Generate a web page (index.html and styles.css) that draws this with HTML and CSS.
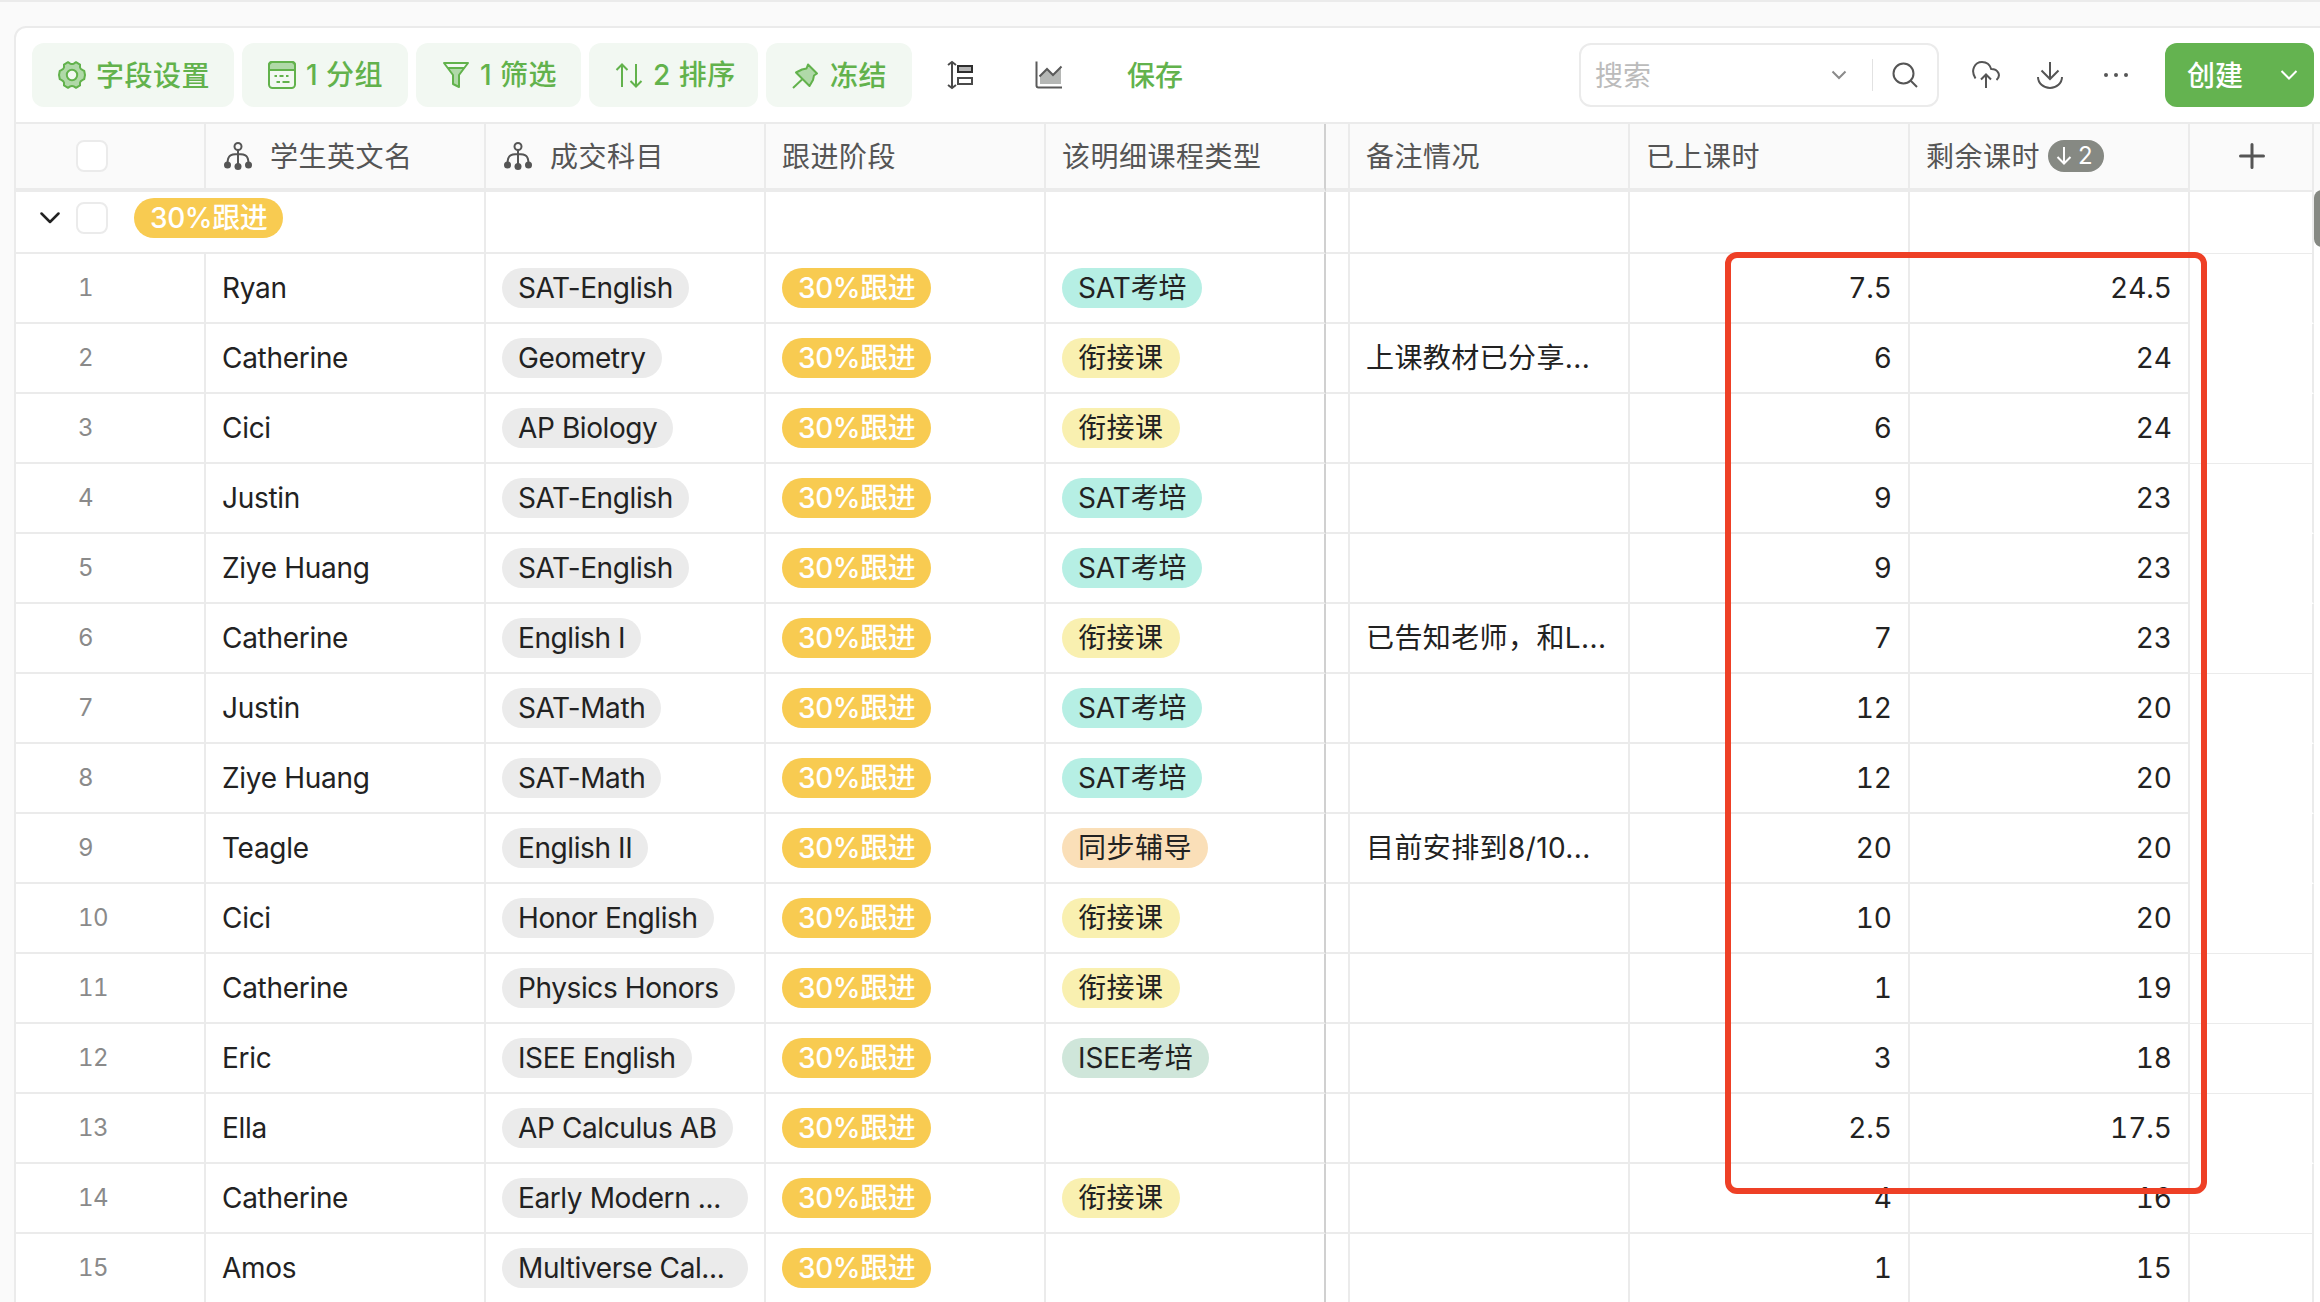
FILE: index.html
```html
<!DOCTYPE html>
<html lang="zh-CN">
<head>
    <meta charset="UTF-8">
    <meta name="viewport" content="width=device-width, initial-scale=1.0">
    <title>学生课时</title>
    <link rel="stylesheet" href="styles.css">
</head>
<body>
    <div class="panel">
        <div class="toolbar">
            <button class="tool-btn fields">
                <svg width="30" height="30" viewBox="0 0 30 30" fill="#b0d9a8" stroke="#62b24c" stroke-width="2" stroke-linejoin="round"><path d="M11 2.2 L13.2 3.6 Q15 4.6 16.8 3.6 L19 2.2 L23 4.6 L23 7.4 Q23.4 9.2 25.2 9.8 L27.2 10.8 L28 15 L27.2 19.2 L25.2 20.2 Q23.4 20.8 23 22.6 L23 25.4 L19 27.8 L16.8 26.4 Q15 25.4 13.2 26.4 L11 27.8 L7 25.4 L7 22.6 Q6.6 20.8 4.8 20.2 L2.8 19.2 L2 15 L2.8 10.8 L4.8 9.8 Q6.6 9.2 7 7.4 L7 4.6 Z"/><circle cx="15" cy="15" r="5.2" fill="#f2f8f2"/></svg>
                <span>字段设置</span>
            </button>
            <button class="tool-btn group">
                <svg width="30" height="30" viewBox="0 0 30 30" fill="none" stroke="#62b24c" stroke-width="2"><path d="M2 10 V5 Q2 2 5 2 H25 Q28 2 28 5 V10 Z" fill="#b0d9a8"/><rect x="2" y="2" width="26" height="26" rx="3.5"/><path d="M7.500 16 H10 M12.500 16 H16.500 M19 16 H21.500 M9.500 22 H13 M15.500 22 H22.500"/></svg>
                <span>1 分组</span>
            </button>
            <button class="tool-btn filter">
                <svg width="30" height="30" viewBox="0 0 30 30" fill="none" stroke="#62b24c" stroke-width="2" stroke-linejoin="round"><path d="M6.500 8.500 H23.500 L18 15 V27 L12 24 V15 Z" fill="#b0d9a8" stroke="none"/><path d="M3 3 H27 L18 15 V27 L12 24 V15 Z M6.500 8 H23.500"/></svg>
                <span>1 筛选</span>
            </button>
            <button class="tool-btn sort">
                <svg width="30" height="30" viewBox="0 0 30 30" fill="none" stroke="#62b24c" stroke-width="2"><path d="M8 27 V4.500 M2.500 10 L8 4.500 L13.500 10 M22 4 V26.500 M16.500 21 L22 26.500 L27.500 21"/></svg>
                <span>2 排序</span>
            </button>
            <button class="tool-btn freeze">
                <svg width="30" height="30" viewBox="0 0 30 30" fill="none" stroke="#62b24c" stroke-width="2" stroke-linejoin="round"><path d="M17 4.500 L26 13.500 L23 15.500 L22 20 L18.500 26 L5 12.500 L11 9.500 L15.500 8.500 Z" fill="#b0d9a8"/><path d="M2 28 L11 19.500"/></svg>
                <span>冻结</span>
            </button>
            <svg class="tool-icon height" width="28" height="30" viewBox="0 0 28 30" fill="none" stroke="#4a4a4a" stroke-width="2"><path d="M5 2 V28 M1 5 L5 2 L9 5 M1 25 L5 28 L9 25"/><rect x="11" y="6" width="14" height="6" fill="#b5b5b5" stroke="#2e2e2e"/><rect x="11" y="18" width="14" height="6"/></svg>
            <svg class="tool-icon chart" width="28" height="28" viewBox="0 0 28 28" fill="none" stroke="#5a5a5a" stroke-width="2"><path d="M5 15 L12 8 L18 14 L26 6 V23 H5 Z" fill="#b5b7b5" stroke="none"/><path d="M1.500 0.500 V24.500 Q1.500 26.500 3.500 26.500 H27 M4.500 15.500 L12 8 L18 14 L26.500 5.500"/></svg>
            <span class="save">保存</span>
            <div class="search">
                <span class="placeholder">搜索</span>
                <svg width="16" height="10" viewBox="0 0 16 10" fill="none" stroke="#8a8a8a" stroke-width="2"><path d="M1.500 1.500 L8 8 L14.500 1.500"/></svg>
                <i class="divider"></i>
                <svg width="26" height="26" viewBox="0 0 26 26" fill="none" stroke="#555" stroke-width="2"><circle cx="11.500" cy="11.500" r="10"/><path d="M18.500 18.500 L25 25"/></svg>
            </div>
            <svg class="tool-icon upload" width="30" height="30" viewBox="0 0 30 30" fill="none" stroke="#555" stroke-width="2"><path d="M4.500 18.500 C-1 10 4 2 11 2 C16 2 19 5 20.200 9 C27 9 30.500 15.500 25.500 20 M15 28 V14.500 M10 19.500 L15 14.500 L20 19.500"/></svg>
            <svg class="tool-icon download" width="28" height="30" viewBox="0 0 28 30" fill="none" stroke="#555" stroke-width="2"><path d="M14 2 V19 M5.500 10.500 L14 19 L22.500 10.500 M2 17 A12 11 0 0 0 26 17"/></svg>
            <svg class="tool-icon more" width="26" height="6" viewBox="0 0 26 6" fill="#555"><circle cx="3" cy="3" r="2"/><circle cx="13" cy="3" r="2"/><circle cx="23" cy="3" r="2"/></svg>
            <button class="create">
                <span>创建</span>
                <svg width="18" height="12" viewBox="0 0 18 12" fill="none" stroke="#fff" stroke-width="2"><path d="M1.500 2 L9 9.500 L16.500 2"/></svg>
            </button>
        </div>

        <div class="row head">
            <div class="cell check"><i class="checkbox"></i></div>
            <div class="cell">
                <svg class="tree" width="28" height="28" viewBox="0 0 28 28" fill="none" stroke="#555" stroke-width="2"><circle cx="14" cy="4.500" r="3.500"/><path d="M14 8 V24 M3.500 22 C3.500 14 6 12 14 12 C22 12 24.500 14 24.500 22"/><g fill="#555" stroke="none"><circle cx="3.500" cy="23" r="3.500"/><circle cx="14" cy="24.500" r="3.500"/><circle cx="24.500" cy="23" r="3.500"/></g></svg>
                <span class="label">学生英文名</span>
            </div>
            <div class="cell">
                <svg class="tree" width="28" height="28" viewBox="0 0 28 28" fill="none" stroke="#555" stroke-width="2"><circle cx="14" cy="4.500" r="3.500"/><path d="M14 8 V24 M3.500 22 C3.500 14 6 12 14 12 C22 12 24.500 14 24.500 22"/><g fill="#555" stroke="none"><circle cx="3.500" cy="23" r="3.500"/><circle cx="14" cy="24.500" r="3.500"/><circle cx="24.500" cy="23" r="3.500"/></g></svg>
                <span class="label">成交科目</span>
            </div>
            <div class="cell"><span class="label">跟进阶段</span></div>
            <div class="cell frozen-edge"><span class="label">该明细课程类型</span></div>
            <div class="cell gap"></div>
            <div class="cell"><span class="label">备注情况</span></div>
            <div class="cell"><span class="label">已上课时</span></div>
            <div class="cell">
                <span class="label">剩余课时</span>
                <span class="sort-badge"><svg width="16" height="20" viewBox="0 0 16 20" fill="none" stroke="#fff" stroke-width="2"><path d="M8 1 V17.500 M1.500 11 L8 17.500 L14.500 11"/></svg>2</span>
            </div>
            <div class="cell add"><svg width="26" height="26" viewBox="0 0 26 26" stroke="#555" stroke-width="3" stroke-linecap="round"><path d="M13 1.500 V24.500 M1.500 13 H24.500"/></svg></div>
        </div>

        <div class="row group-row">
            <div class="cell group-title">
                <svg width="20" height="12" viewBox="0 0 20 12" fill="none" stroke="#222" stroke-width="2.500" stroke-linecap="round" stroke-linejoin="round"><path d="M1.500 1.500 L10 10 L18.500 1.500"/></svg>
                <i class="checkbox"></i>
                <span class="tag stage">30%跟进</span>
            </div>
            <div class="cell"></div><div class="cell"></div><div class="cell frozen-edge"></div><div class="cell gap"></div><div class="cell"></div><div class="cell"></div><div class="cell"></div><div class="cell blank"></div>
        </div>

        <div class="row"><div class="cell index">1</div><div class="cell">Ryan</div><div class="cell"><span class="tag">SAT-English</span></div><div class="cell"><span class="tag stage">30%跟进</span></div><div class="cell frozen-edge"><span class="tag sat">SAT考培</span></div><div class="cell gap"></div><div class="cell remark"></div><div class="cell num">7.5</div><div class="cell num">24.5</div><div class="cell blank"></div></div>
        <div class="row"><div class="cell index">2</div><div class="cell">Catherine</div><div class="cell"><span class="tag">Geometry</span></div><div class="cell"><span class="tag stage">30%跟进</span></div><div class="cell frozen-edge"><span class="tag bridge">衔接课</span></div><div class="cell gap"></div><div class="cell remark">上课教材已分享...</div><div class="cell num">6</div><div class="cell num">24</div><div class="cell blank"></div></div>
        <div class="row"><div class="cell index">3</div><div class="cell">Cici</div><div class="cell"><span class="tag">AP Biology</span></div><div class="cell"><span class="tag stage">30%跟进</span></div><div class="cell frozen-edge"><span class="tag bridge">衔接课</span></div><div class="cell gap"></div><div class="cell remark"></div><div class="cell num">6</div><div class="cell num">24</div><div class="cell blank line"></div></div>
        <div class="row"><div class="cell index">4</div><div class="cell">Justin</div><div class="cell"><span class="tag">SAT-English</span></div><div class="cell"><span class="tag stage">30%跟进</span></div><div class="cell frozen-edge"><span class="tag sat">SAT考培</span></div><div class="cell gap"></div><div class="cell remark"></div><div class="cell num">9</div><div class="cell num">23</div><div class="cell blank"></div></div>
        <div class="row"><div class="cell index">5</div><div class="cell">Ziye Huang</div><div class="cell"><span class="tag">SAT-English</span></div><div class="cell"><span class="tag stage">30%跟进</span></div><div class="cell frozen-edge"><span class="tag sat">SAT考培</span></div><div class="cell gap"></div><div class="cell remark"></div><div class="cell num">9</div><div class="cell num">23</div><div class="cell blank"></div></div>
        <div class="row"><div class="cell index">6</div><div class="cell">Catherine</div><div class="cell"><span class="tag">English I</span></div><div class="cell"><span class="tag stage">30%跟进</span></div><div class="cell frozen-edge"><span class="tag bridge">衔接课</span></div><div class="cell gap"></div><div class="cell remark">已告知老师，和L...</div><div class="cell num">7</div><div class="cell num">23</div><div class="cell blank line"></div></div>
        <div class="row"><div class="cell index">7</div><div class="cell">Justin</div><div class="cell"><span class="tag">SAT-Math</span></div><div class="cell"><span class="tag stage">30%跟进</span></div><div class="cell frozen-edge"><span class="tag sat">SAT考培</span></div><div class="cell gap"></div><div class="cell remark"></div><div class="cell num">12</div><div class="cell num">20</div><div class="cell blank"></div></div>
        <div class="row"><div class="cell index">8</div><div class="cell">Ziye Huang</div><div class="cell"><span class="tag">SAT-Math</span></div><div class="cell"><span class="tag stage">30%跟进</span></div><div class="cell frozen-edge"><span class="tag sat">SAT考培</span></div><div class="cell gap"></div><div class="cell remark"></div><div class="cell num">12</div><div class="cell num">20</div><div class="cell blank"></div></div>
        <div class="row"><div class="cell index">9</div><div class="cell">Teagle</div><div class="cell"><span class="tag">English II</span></div><div class="cell"><span class="tag stage">30%跟进</span></div><div class="cell frozen-edge"><span class="tag sync">同步辅导</span></div><div class="cell gap"></div><div class="cell remark">目前安排到8/10...</div><div class="cell num">20</div><div class="cell num">20</div><div class="cell blank"></div></div>
        <div class="row"><div class="cell index">10</div><div class="cell">Cici</div><div class="cell"><span class="tag">Honor English</span></div><div class="cell"><span class="tag stage">30%跟进</span></div><div class="cell frozen-edge"><span class="tag bridge">衔接课</span></div><div class="cell gap"></div><div class="cell remark"></div><div class="cell num">10</div><div class="cell num">20</div><div class="cell blank line"></div></div>
        <div class="row"><div class="cell index">11</div><div class="cell">Catherine</div><div class="cell"><span class="tag">Physics Honors</span></div><div class="cell"><span class="tag stage">30%跟进</span></div><div class="cell frozen-edge"><span class="tag bridge">衔接课</span></div><div class="cell gap"></div><div class="cell remark"></div><div class="cell num">1</div><div class="cell num">19</div><div class="cell blank line"></div></div>
        <div class="row"><div class="cell index">12</div><div class="cell">Eric</div><div class="cell"><span class="tag">ISEE English</span></div><div class="cell"><span class="tag stage">30%跟进</span></div><div class="cell frozen-edge"><span class="tag isee">ISEE考培</span></div><div class="cell gap"></div><div class="cell remark"></div><div class="cell num">3</div><div class="cell num">18</div><div class="cell blank line"></div></div>
        <div class="row"><div class="cell index">13</div><div class="cell">Ella</div><div class="cell"><span class="tag">AP Calculus AB</span></div><div class="cell"><span class="tag stage">30%跟进</span></div><div class="cell frozen-edge"></div><div class="cell gap"></div><div class="cell remark"></div><div class="cell num">2.5</div><div class="cell num">17.5</div><div class="cell blank"></div></div>
        <div class="row"><div class="cell index">14</div><div class="cell">Catherine</div><div class="cell"><span class="tag full">Early Modern ...</span></div><div class="cell"><span class="tag stage">30%跟进</span></div><div class="cell frozen-edge"><span class="tag bridge">衔接课</span></div><div class="cell gap"></div><div class="cell remark"></div><div class="cell num">4</div><div class="cell num">16</div><div class="cell blank line"></div></div>
        <div class="row"><div class="cell index">15</div><div class="cell">Amos</div><div class="cell"><span class="tag full">Multiverse Cal...</span></div><div class="cell"><span class="tag stage">30%跟进</span></div><div class="cell frozen-edge"></div><div class="cell gap"></div><div class="cell remark"></div><div class="cell num">1</div><div class="cell num">15</div><div class="cell blank"></div></div>

        <div class="scroll-thumb"></div>
        <div class="highlight"></div>
    </div>
</body>
</html>
```
FILE: styles.css
```css
* {
    margin: 0;
    padding: 0;
    box-sizing: border-box;
}

body {
    height: 1302px;
    overflow: hidden;
    padding: 24px 0 0 14px;
    border-top: 2px solid #ebebeb;
    background-color: #fafafa;
    font-family: Inter, "Noto Sans CJK SC", sans-serif;
    font-size: 28px;
    line-height: 40px;
    color: #222;
}

svg {
    flex: none;
    display: block;
}

button {
    border: none;
    font: inherit;
    cursor: pointer;
}

.panel {
    position: relative;
    width: 2330px;
    height: 1290px;
    overflow: hidden;
    border: 2px solid #ebebeb;
    border-radius: 12px;
    background-color: #fff;
}

/* toolbar */
.toolbar {
    display: flex;
    align-items: center;
    height: 94px;
    padding-left: 16px;
}

.tool-btn {
    display: flex;
    align-items: center;
    gap: 9px;
    height: 64px;
    margin-right: 8px;
    padding-left: 25px;
    border-radius: 12px;
    background-color: #f2f8f2;
    color: #62b24c;
    font-weight: 500;
    white-space: nowrap;
    letter-spacing: 0.5px;
}

.fields { width: 202px; }
.group { width: 166px; }
.filter { width: 165px; }
.sort { width: 169px; }
.freeze { width: 146px; }

.fields span,
.freeze span,
.create span,
.save,
.placeholder,
.label {
    padding-top: 2px;
}

.height { margin-left: 27px; }
.chart { margin-left: 60px; }

.save {
    width: 60px;
    margin-left: 64px;
    color: #62b24c;
    font-weight: 500;
}

.search {
    display: flex;
    align-items: center;
    width: 360px;
    height: 64px;
    margin-left: 392px;
    padding-left: 14px;
    border: 2px solid #ebebeb;
    border-radius: 12px;
}

.placeholder {
    width: 236px;
    color: #bbb;
}

.divider {
    width: 1px;
    height: 32px;
    margin: 0 19px 0 25px;
    background-color: #e2e2e2;
}

.upload { margin-left: 32px; }
.download { margin-left: 35px; }
.more { margin-left: 39px; }

.create {
    display: flex;
    align-items: center;
    justify-content: space-between;
    width: 149px;
    height: 64px;
    margin-left: 36px;
    padding: 0 16px 0 22px;
    border-radius: 12px;
    background-color: #64b350;
    color: #fff;
    font-weight: 500;
}

/* table */
.row {
    display: grid;
    grid-template-columns: 190px repeat(4, 280px) 24px repeat(3, 280px) 124px;
    height: 70px;
}

.cell {
    display: flex;
    align-items: center;
    padding: 0 16px;
    border-right: 2px solid #ebebeb;
    border-bottom: 2px solid #ebebeb;
    white-space: nowrap;
    letter-spacing: -0.3px;
}

.gap {
    padding: 0;
}

.frozen-edge {
    border-right-color: #d0d0d0;
}

.head {
    height: 70px;
    border-top: 2px solid #ebebeb;
    background-color: #fafafa;
    color: #555;
}

.head .cell {
    border-bottom-width: 4px;
    letter-spacing: 0.5px;
}

.head .add {
    justify-content: center;
    padding: 0 0 2px 2px;
    border-bottom-width: 2px;
}

.check {
    padding-left: 60px;
}

.checkbox {
    width: 32px;
    height: 32px;
    border: 2px solid #ebebeb;
    border-radius: 8px;
    background-color: #fff;
}

.tree {
    margin: 0 18px 0 2px;
}

.sort-badge {
    display: flex;
    align-items: center;
    gap: 6px;
    width: 56px;
    height: 32px;
    margin-left: 8px;
    padding-left: 8px;
    border-radius: 16px;
    background-color: #868983;
    color: #fff;
    font-size: 24px;
}

.group-row {
    grid-template-columns: 470px repeat(3, 280px) 24px repeat(3, 280px) 124px;
    height: 62px;
}

.group-title {
    padding: 0 0 8px 24px;
}

.group-title .checkbox {
    margin: 0 26px 0 16px;
}

.index {
    padding-left: 62px;
    color: #8a8a8a;
    font-size: 24px;
    letter-spacing: -0.5px;
    font-variant-numeric: tabular-nums;
}

.remark {
    letter-spacing: 0.4px;
}

.num {
    justify-content: flex-end;
    letter-spacing: 0;
    font-variant-numeric: tabular-nums;
}

.blank {
    border-bottom-color: transparent;
}

.blank.line,
.group-row .blank {
    border-bottom: 1px solid #ebebeb;
}

.tag {
    height: 40px;
    padding: 0 16px;
    border-radius: 20px;
    background-color: #ebebeb;
    letter-spacing: -0.4px;
}

.full { width: 246px; }

.stage {
    background-color: #f8cb51;
    color: #fff;
    font-weight: 500;
}

.sat,
.isee {
    letter-spacing: -0.1px;
}

.bridge,
.sync {
    letter-spacing: 0.5px;
}

.sat { background-color: #b6efe4; }
.bridge { background-color: #f9f0b0; }
.sync { background-color: #fadfb8; }
.isee { background-color: #cfe6da; }

/* overlays */
.scroll-thumb {
    position: absolute;
    top: 162px;
    left: 2298px;
    width: 16px;
    height: 57px;
    border-radius: 8px;
    background-color: #868983;
}

.highlight {
    position: absolute;
    top: 224px;
    left: 1709px;
    width: 482px;
    height: 942px;
    border: 6px solid #ee4026;
    border-radius: 12px;
}
```
